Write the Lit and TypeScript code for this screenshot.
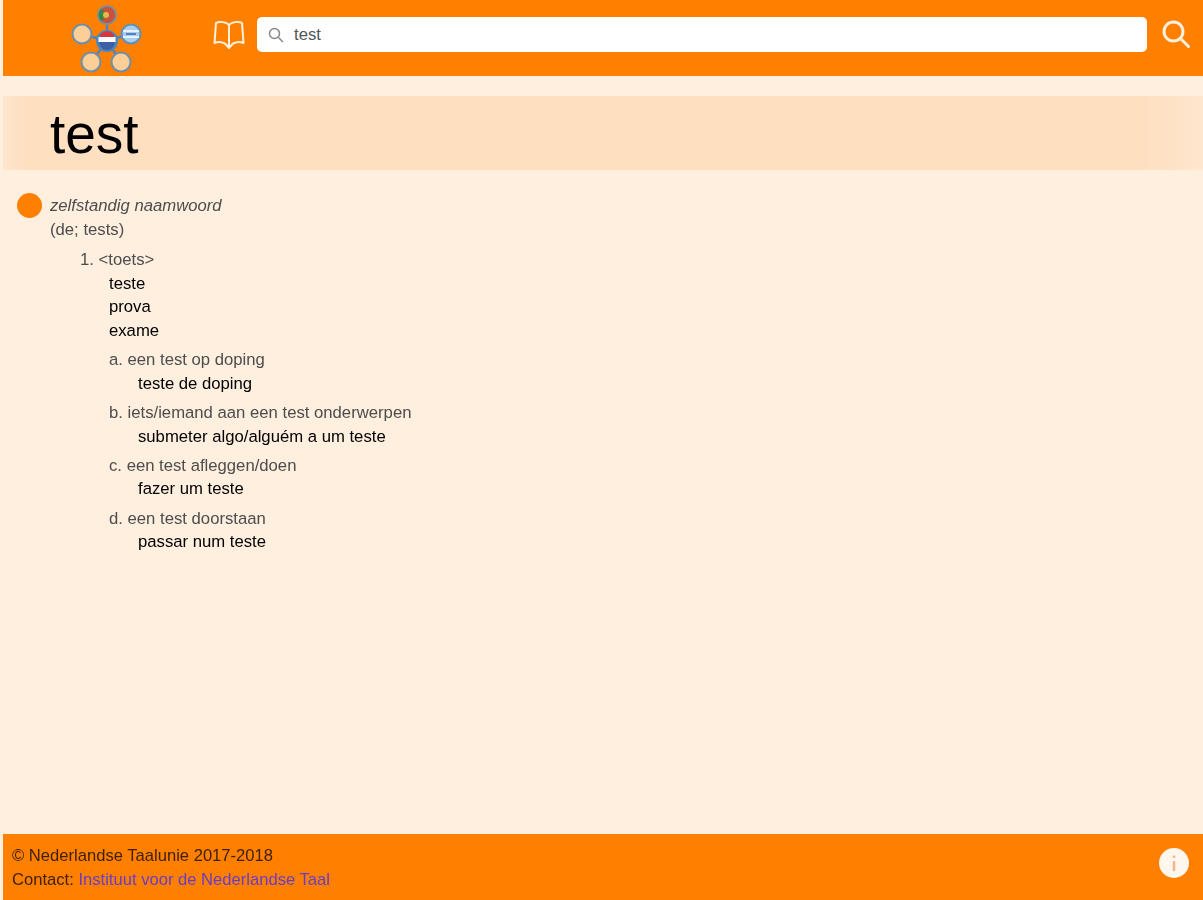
import { LitElement, html, css, svg } from "lit";
import { customElement } from "lit/decorators.js";

const SUBS = [
  ["a.", "een test op doping", "teste de doping"],
  ["b.", "iets/iemand aan een test onderwerpen", "submeter algo/alguém a um teste"],
  ["c.", "een test afleggen/doen", "fazer um teste"],
  ["d.", "een test doorstaan", "passar num teste"],
];

const node = (cx: number, cy: number) =>
  svg`<circle cx=${cx} cy=${cy} r="9.5" fill="#fdcf97" stroke="#6d8fab" stroke-width="2"/>`;

const logo = html`<svg class="logo" width="72" height="72" viewBox="0 0 72 72">
  <g stroke="#4d86bd" stroke-width="2.4">
    <line x1="36" y1="40" x2="36" y2="14"/>
    <line x1="36" y1="40" x2="11" y2="33"/>
    <line x1="36" y1="40" x2="60" y2="33"/>
    <line x1="36" y1="40" x2="20" y2="61"/>
    <line x1="36" y1="40" x2="50" y2="61"/>
  </g>
  ${node(11, 33)}${node(20, 61)}${node(50, 61)}
  <circle cx="36" cy="14" r="9" fill="#c9503a" stroke="#7d8f99" stroke-width="2"/>
  <path d="M31 7.500a8 8 0 0 0 0 13l3-6.500z" fill="#2f8a45"/>
  <circle cx="35" cy="14" r="3" fill="#e3b94a"/>
  <circle cx="60" cy="33" r="9.500" fill="#a9cdee" stroke="#5f8fb5" stroke-width="2"/>
  <path d="M52 30h16M52 36h16" stroke="#e8f2fb" stroke-width="2"/>
  <path d="M55 33h10" stroke="#3a6fb0" stroke-width="1.600"/>
  <circle cx="36" cy="40" r="11" fill="#4d86bd"/>
  <path d="M29 34a8.500 8.500 0 0 1 14 0v2h-14z" fill="#d8353f"/>
  <path d="M27.500 36h17v5h-17z" fill="#fff"/>
  <path d="M28 41h16a8 8 0 0 1-16 0z" fill="#3c5fa8"/>
</svg>`;

@customElement("app-root")
export class AppRoot extends LitElement {
  static styles = css`
    :host {
      display: flex;
      flex-direction: column;
      height: 900px;
      overflow: hidden;
      background: #feefdf;
      font-family: "Liberation Sans", Arial, sans-serif;
      font-size: 16.7px;
      line-height: 23.6px;
      color: #000;
    }
    .shell {
      flex: 1;
      display: flex;
      flex-direction: column;
      margin-left: 3px;
      min-height: 0;
      filter: blur(0.7px);
    }
    header {
      height: 76px;
      flex: none;
      background: #ff8000;
      display: flex;
      align-items: center;
    }
    .logo { flex: none; margin-left: 68px; margin-top: -3px; }
    .book { flex: none; margin-left: 70px; margin-top: -6px; }
    .search {
      flex: none;
      margin-left: 12px;
      width: 890px;
      height: 35px;
      background: #fff;
      border-radius: 5px;
      display: flex;
      align-items: center;
      gap: 10px;
      padding-left: 11px;
      box-sizing: border-box;
      color: #555;
      margin-top: -7px;
    }
    .go { flex: none; margin-left: 14px; margin-top: -9px; }
    main { flex: 1; min-height: 0; }
    .title {
      margin-top: 20px;
      height: 74px;
      background: linear-gradient(90deg, #fee6ce 0, #fedfc0 24px, #fedfc0 calc(100% - 60px), #fee6ce 100%);
      padding-left: 47px;
      font-size: 55px;
      line-height: 77px;
    }
    .entry { position: relative; padding: 24px 0 0 47px; color: #4d4d4d; }
    .dot {
      position: absolute;
      left: 14px;
      top: 23px;
      width: 25px;
      height: 25px;
      border-radius: 50%;
      background: #ff8000;
    }
    .pos { font-style: italic; }
    .sense { margin-top: 7px; padding-left: 30px; }
    .tr { color: #000; padding-left: 29px; }
    .sub { margin-top: 5.600px; padding-left: 29px; }
    .sub .tr { padding-left: 29px; }
    footer {
      height: 66px;
      flex: none;
      background: #ff8000;
      display: flex;
      justify-content: space-between;
      align-items: center;
      padding: 1px 14px 0 9px;
      box-sizing: border-box;
      color: #3f2000;
      font-size: 16.6px;
    }
    footer a { color: #6a3cc0; text-decoration: none; }
    .info { flex: none; margin-top: -10px; margin-right: -1px; }
  `;

  render() {
    return html`<div class="shell">
      <header>
        ${logo}
        <svg class="book" width="32" height="30" viewBox="0 0 32 30" fill="none" stroke="#fff0dc" stroke-width="2" stroke-linejoin="round">
          <path d="M16 5C14 2 6 1 3 3L1.500 23c4-1.500 9-1 11 1l3.500 4 3.500-4c2-2 7-2.500 11-1L29 3c-3-2-11-1-13 2z"/>
          <path d="M16 5v21"/>
        </svg>
        <div class="search">
          <svg width="16" height="16" viewBox="0 0 16 16" fill="none" stroke="#888" stroke-width="1.500">
            <circle cx="6.500" cy="6.500" r="5"/><path d="M10.500 10.500l4.500 4.500"/>
          </svg>
          <span>test</span>
        </div>
        <svg class="go" width="30" height="30" viewBox="0 0 30 30" fill="none" stroke="#fff0dc" stroke-width="3">
          <circle cx="12.500" cy="12.500" r="9.500"/><path d="M19.500 19.500l8 8" stroke-linecap="round"/>
        </svg>
      </header>
      <main>
        <div class="title">test</div>
        <div class="entry">
          <span class="dot"></span>
          <div class="pos">zelfstandig naamwoord</div>
          <div>(de; tests)</div>
          <div class="sense">
            <div>1. &lt;toets&gt;</div>
            <div class="tr">teste</div>
            <div class="tr">prova</div>
            <div class="tr">exame</div>
            ${SUBS.map(
              ([l, nl, pt]) => html`<div class="sub">
                <div>${l} ${nl}</div>
                <div class="tr">${pt}</div>
              </div>`
            )}
          </div>
        </div>
      </main>
      <footer>
        <div>
          <div>© Nederlandse Taalunie 2017-2018</div>
          <div>Contact: <a>Instituut voor de Nederlandse Taal</a></div>
        </div>
        <svg class="info" width="32" height="32" viewBox="0 0 32 32">
          <circle cx="16" cy="16" r="15" fill="#fff6ee"/>
          <path d="M16 8.500v2.500M16 14v10" stroke="#f6b488" stroke-width="2.500"/>
        </svg>
      </footer>
    </div>`;
  }
}
